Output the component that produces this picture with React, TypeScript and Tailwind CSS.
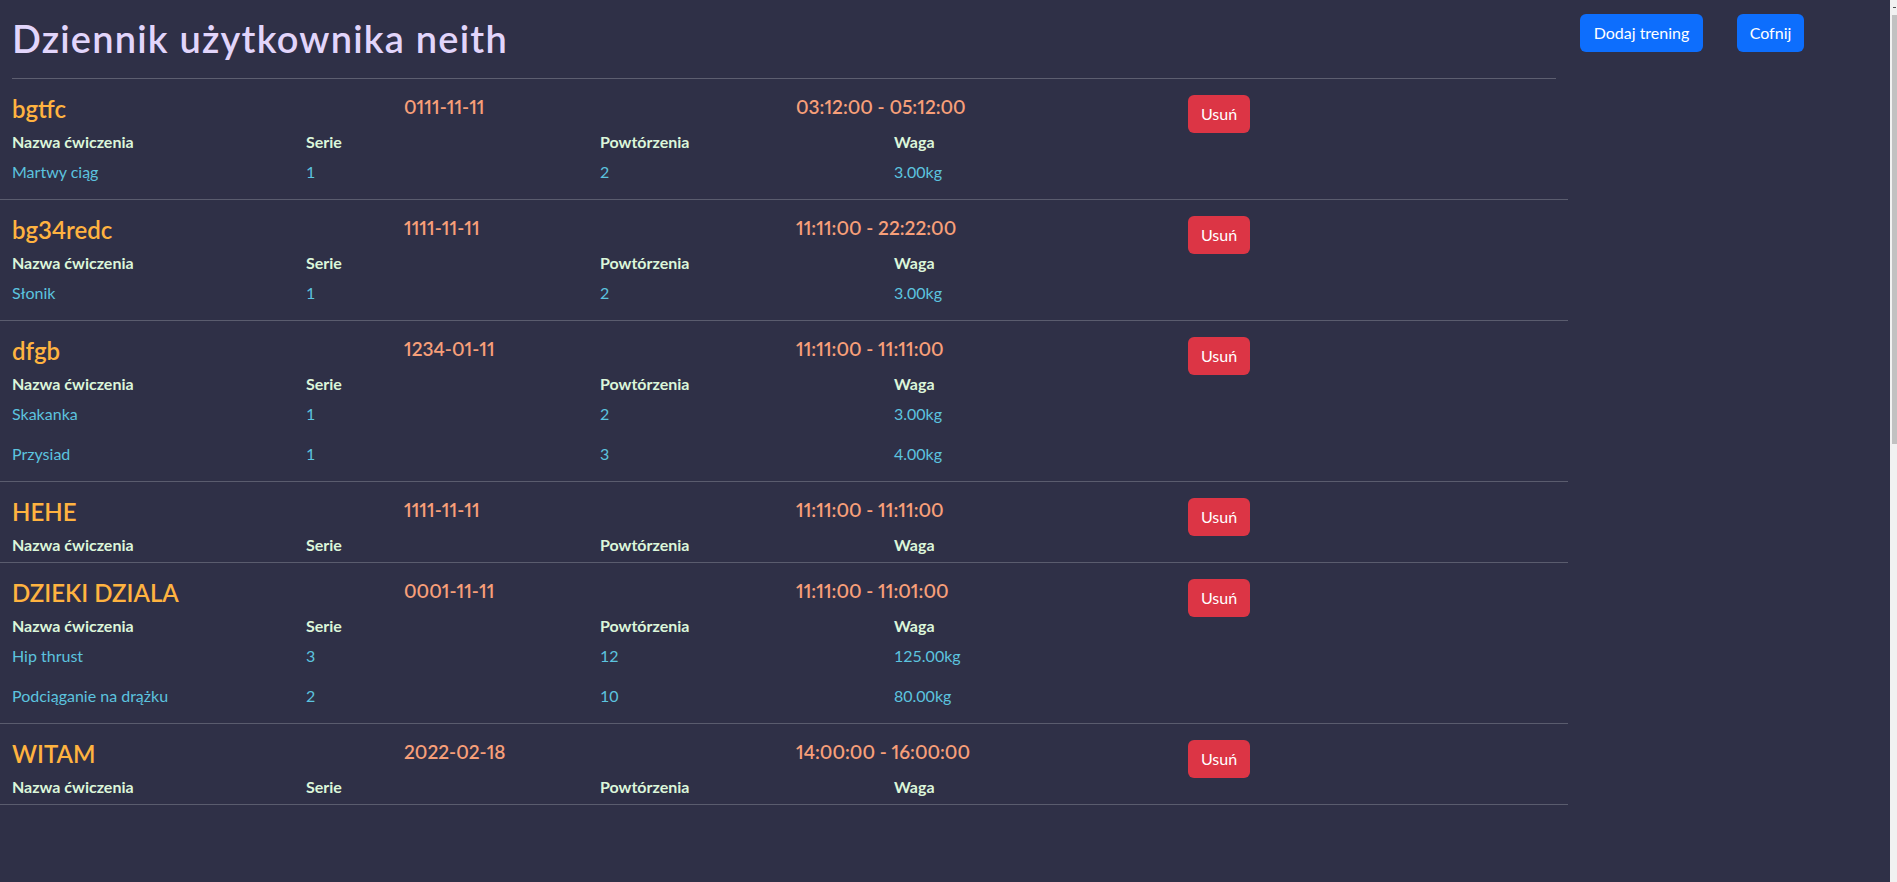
type Exercise = {
    name: string
    sets: number
    reps: number
    weight: string
}

type Workout = {
    name: string
    date: string
    time: string
    exercises: Exercise[]
}

const workouts: Workout[] = [
    {
        name: "bgtfc",
        date: "0111-11-11",
        time: "03:12:00 - 05:12:00",
        exercises: [{ name: "Martwy ciąg", sets: 1, reps: 2, weight: "3.00kg" }],
    },
    {
        name: "bg34redc",
        date: "1111-11-11",
        time: "11:11:00 - 22:22:00",
        exercises: [{ name: "Słonik", sets: 1, reps: 2, weight: "3.00kg" }],
    },
    {
        name: "dfgb",
        date: "1234-01-11",
        time: "11:11:00 - 11:11:00",
        exercises: [
            { name: "Skakanka", sets: 1, reps: 2, weight: "3.00kg" },
            { name: "Przysiad", sets: 1, reps: 3, weight: "4.00kg" },
        ],
    },
    {
        name: "HEHE",
        date: "1111-11-11",
        time: "11:11:00 - 11:11:00",
        exercises: [],
    },
    {
        name: "DZIEKI DZIALA",
        date: "0001-11-11",
        time: "11:11:00 - 11:01:00",
        exercises: [
            { name: "Hip thrust", sets: 3, reps: 12, weight: "125.00kg" },
            { name: "Podciąganie na drążku", sets: 2, reps: 10, weight: "80.00kg" },
        ],
    },
    {
        name: "WITAM",
        date: "2022-02-18",
        time: "14:00:00 - 16:00:00",
        exercises: [],
    },
]

const WorkoutRow = ({ workout }: { workout: Workout }) => {
    return (
        <section className="border-b border-[#5a5c6e] pt-4">
            {/* naglowek treningu */}
            <div className="flex h-[38px] items-start">
                <div className="w-[392px] px-3">
                    <h4 className="text-[24px] leading-[1.2] font-semibold text-[#ffb340]">{workout.name}</h4>
                </div>
                <div className="w-[392px] px-3 pt-[1px]">
                    <h5 className="text-[19px] leading-[1.2] font-semibold text-[#f79f79] proportional-nums">
                        {workout.date}
                    </h5>
                </div>
                <div className="w-[392px] px-3 pt-[1px]">
                    <h5 className="text-[19px] leading-[1.2] font-semibold text-[#f79f79] proportional-nums">
                        {workout.time}
                    </h5>
                </div>
                <div className="px-3">
                    <button className="h-[38px] w-[62px] rounded-[6px] bg-[#dc3545] text-[16px] text-white">
                        Usuń
                    </button>
                </div>
            </div>

            {/* tabela cwiczen */}
            <div className="w-[1176px] text-[16px]">
                <div className="mt-[1px] grid grid-cols-4 leading-[16px] font-bold text-[#dcf6da]">
                    <div className="px-3">Nazwa ćwiczenia</div>
                    <div className="px-3">Serie</div>
                    <div className="px-3">Powtórzenia</div>
                    <div className="px-3">Waga</div>
                </div>
                <div className="pt-[2px] pb-[7px]">
                    {workout.exercises.map((ex) => (
                        <div key={ex.name} className="grid h-[40px] grid-cols-4 leading-[40px] text-[#5cc3df]">
                            <div className="px-3">{ex.name}</div>
                            <div className="px-3">{ex.sets}</div>
                            <div className="px-3">{ex.reps}</div>
                            <div className="px-3">{ex.weight}</div>
                        </div>
                    ))}
                </div>
            </div>
        </section>
    )
}

const App = () => {
    return (
        <div className="flex h-screen w-full overflow-hidden bg-[#2f3047] font-['Lato',sans-serif]">
            <div className="flex flex-1">
                {/* Lewa strona */}
                <main className="w-[1568px] shrink-0">
                    <div className="px-3">
                        <h1 className="pt-[16px] text-[38px] leading-[1.2] font-semibold tracking-[1.2px] text-[#e2d5fb]">
                            Dziennik użytkownika neith
                        </h1>
                        <hr className="mt-[16px] border-t border-[#5d5e70]" />
                    </div>
                    {workouts.map((w) => (
                        <WorkoutRow key={w.name} workout={w} />
                    ))}
                </main>

                {/* Prawa strona */}
                <aside className="flex flex-1 items-start gap-[34px] px-3 pt-[14px]">
                    <button className="h-[38px] w-[123px] rounded-[6px] bg-[#0d6efd] text-[16px] text-white">
                        Dodaj trening
                    </button>
                    <button className="h-[38px] w-[67px] rounded-[6px] bg-[#0d6efd] text-[16px] text-white">
                        Cofnij
                    </button>
                </aside>
            </div>

            {/* pasek przewijania */}
            <div className="flex w-[7px] flex-col bg-[#f1f1f1]">
                <div className="flex h-[15px] items-center justify-end pr-[1px]">
                    <div className="h-[1px] w-[3px] bg-[#505050]" />
                </div>
                <div className="ml-[2px] h-[429px] bg-[#c1c1c1]" />
            </div>
        </div>
    )
}

export default App
